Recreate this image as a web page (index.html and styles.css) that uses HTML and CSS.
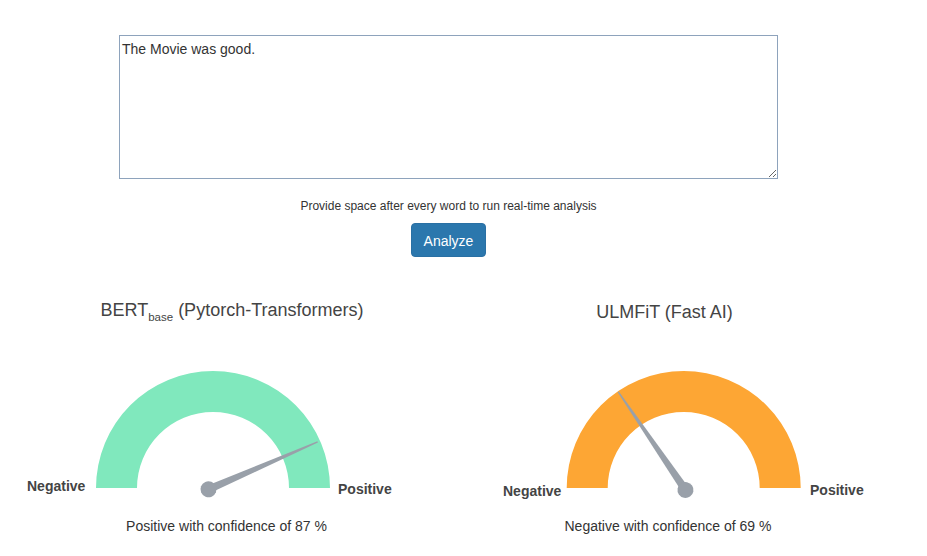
FILE: index.html
```html
<!DOCTYPE html>
<html lang="en">
<head>
<meta charset="utf-8">
<title>Sentiment Analysis</title>
<link rel="stylesheet" href="styles.css">
</head>
<body>
<main class="page">
  <section class="input-area">
    <textarea class="review">The Movie was good.</textarea>
    <p class="hint">Provide space after every word to run real-time analysis</p>
    <button class="btn-analyze" type="button">Analyze</button>
  </section>

  <section class="gauges">
    <div class="gauge-col gauge-col-left">
      <h2 class="gauge-title title-left">BERT<sub class="sub">base</sub> (Pytorch-Transformers)</h2>
      <svg class="gauge" width="448" height="194" viewBox="0 0 448 194">
        <path class="arc-green" d="M 96 166 A 117 117 0 0 1 330 166 L 289 166 A 76 76 0 0 0 137 166 Z"/>
        <g transform="translate(208.5 167.3) rotate(-23.5)">
          <polygon class="needle" points="0,-4 119,-0.7 119,0.7 0,4"/>
          <circle class="needle" cx="0" cy="0" r="8"/>
        </g>
        <text class="gauge-label" x="27" y="169">Negative</text>
        <text class="gauge-label" x="338" y="171.5">Positive</text>
      </svg>
      <p class="verdict verdict-left">Positive with confidence of 87 %</p>
    </div>

    <div class="gauge-col gauge-col-right">
      <h2 class="gauge-title title-right">ULMFiT (Fast AI)</h2>
      <svg class="gauge" width="449" height="194" viewBox="0 0 449 194">
        <path class="arc-orange" d="M 118.7 166 A 117 117 0 0 1 352.7 166 L 311.7 166 A 76 76 0 0 0 159.7 166 Z"/>
        <g transform="translate(237.5 168) rotate(-124.4)">
          <polygon class="needle" points="0,-4 119,-0.7 119,0.7 0,4"/>
          <circle class="needle" cx="0" cy="0" r="8"/>
        </g>
        <text class="gauge-label" x="55" y="173.5">Negative</text>
        <text class="gauge-label" x="362" y="173">Positive</text>
      </svg>
      <p class="verdict verdict-right">Negative with confidence of 69 %</p>
    </div>
  </section>
</main>
</body>
</html>
```

FILE: styles.css
```css
html, body {
  margin: 0;
  padding: 0;
  background: #ffffff;
}

body {
  font-family: "Liberation Sans", Arial, sans-serif;
  font-size: 14px;
  line-height: 20px;
  color: #333333;
}

.page {
  width: 897px;
  padding-top: 35px;
}

.input-area {
  display: flex;
  flex-direction: column;
  align-items: center;
}

.review {
  display: block;
  box-sizing: border-box;
  width: 659px;
  height: 144px;
  margin: 0;
  padding: 3px 2px 2px 2px;
  border: 1px solid #8ea3bc;
  border-radius: 0;
  font-family: "Liberation Sans", Arial, sans-serif;
  font-size: 14px;
  line-height: 20px;
  color: #333333;
  background: #ffffff;
  resize: both;
  outline: none;
}

.hint {
  margin: 19px 0 0 0;
  font-size: 12px;
  line-height: 17px;
  color: #333333;
}

.btn-analyze {
  margin-top: 8px;
  box-sizing: border-box;
  height: 34px;
  padding: 7px 12px 5px 12px;
  border: 1px solid #2a70a4;
  border-radius: 4px;
  background: #2b77ad;
  color: #ffffff;
  font-family: "Liberation Sans", Arial, sans-serif;
  font-size: 14px;
  line-height: 20px;
  cursor: pointer;
}

.gauges {
  display: flex;
  margin-top: 41px;
}

.gauge-col-left {
  width: 448px;
}

.gauge-col-right {
  width: 449px;
}

.gauge-title {
  margin: 0;
  font-size: 18px;
  font-weight: normal;
  line-height: 24px;
  color: #444444;
  text-align: center;
}

.title-left {
  padding-left: 16px;
}

.title-right {
  padding-right: 16px;
  position: relative;
  top: 2px;
}

.sub {
  font-size: 11.5px;
  line-height: 0;
  vertical-align: -5px;
}

.gauge {
  display: block;
}

.arc-green {
  fill: #80e8bd;
}

.arc-orange {
  fill: #fda634;
}

.needle {
  fill: #99a0a9;
}

.gauge-label {
  font-family: "Liberation Sans", Arial, sans-serif;
  font-size: 14px;
  font-weight: bold;
  fill: #444444;
}

.verdict {
  margin: 0;
  font-size: 14px;
  line-height: 20px;
  color: #333333;
  text-align: center;
}

.verdict-left {
  padding-left: 5px;
}

.verdict-right {
  padding-right: 9px;
}
```
